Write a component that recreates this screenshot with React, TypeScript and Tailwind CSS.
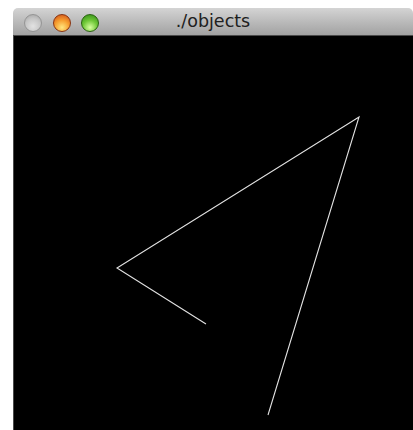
import React from "react";

// A small OS-style window with a black drawing surface showing a polyline.
const points = "192,288 103,232 345,81 254,379";

function Light({ className }: { className: string }) {
  return <span className={`block w-[18px] h-[18px] rounded-full border ${className}`} />;
}

export default function App() {
  return (
    <div className="w-[413px] h-[430px] bg-white pl-[13px] pt-[8px] overflow-hidden">
      <div className="flex flex-col h-full">
        {/* Title bar */}
        <div className="relative h-[28px] shrink-0 rounded-t-[5px] bg-gradient-to-b from-[#d4d4d4] to-[#a2a2a2] border-b border-[#4a4a4a] flex items-center">
          <div className="flex items-center gap-[10.5px] pl-[11px] pt-[2px]">
            <Light className="border-[#959595] bg-[radial-gradient(circle_at_50%_70%,#e2e2e2,#c6c6c6_55%,#a0a0a0)]" />
            <Light className="border-[#8a3410] bg-[radial-gradient(circle_at_50%_78%,#ffe680,#f7a030_48%,#cc4a18)]" />
            <Light className="border-[#2a6410] bg-[radial-gradient(circle_at_50%_78%,#d8ffa0,#70c838_48%,#2e8a14)]" />
          </div>
          <span className="absolute inset-x-0 top-[3px] text-center text-[17.5px] leading-[20px] text-[#202020] [font-family:'Lucida_Grande','DejaVu_Sans','Noto_Sans',sans-serif]">
            ./objects
          </span>
        </div>
        {/* Drawing surface */}
        <div className="flex-1 bg-black border-l border-[#4a4a4a]">
          <svg width="400" height="394" className="block">
            <polyline
              points={points}
              fill="none"
              stroke="#e2e2e2"
              strokeWidth="1.1"
              strokeLinejoin="miter"
            />
          </svg>
        </div>
      </div>
    </div>
  );
}
